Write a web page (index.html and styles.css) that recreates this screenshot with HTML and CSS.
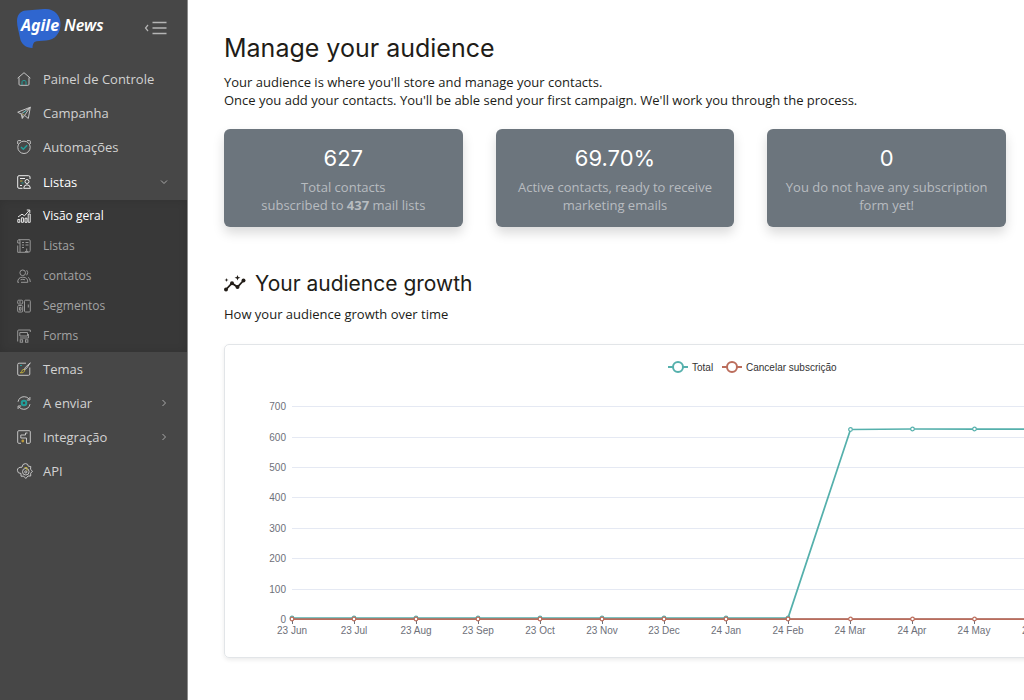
FILE: index.html
```html
<!DOCTYPE html>
<html lang="pt">
<head>
<meta charset="utf-8">
<meta name="viewport" content="width=device-width, initial-scale=1">
<title>Agile News</title>
<link rel="stylesheet" href="styles.css">
</head>
<body>
<div class="app">
  <aside class="sidebar">
    <div class="brand">
      <a class="logo" href="#" aria-label="Agile News">
        <svg width="92" height="42" viewBox="0 0 92 42">
          <path fill="#2f66cf" d="M0 13C0 7 3 3 9 2.500L27 1C37 0 43 7 43.500 15C44 25 38 32 29 32.500C24 33 20 32.500 17.500 34C16 35.500 15.500 38 15.500 40C9 40 4 36 3 30C2 24 0 19 0 13Z"/>
          <text class="logo-text" x="4" y="23">Agile</text>
          <text class="logo-text logo-news" x="47" y="23">News</text>
        </svg>
      </a>
      <button class="collapse" type="button" aria-label="Menu">
        <svg width="24" height="14" viewBox="0 0 24 14" fill="none" stroke="#b5b5b5">
          <path d="M4 4L1.500 7L4 10" stroke-width="1.200"/>
          <path d="M8.500 1.500H22.500M8.500 7H22.500M8.500 12.500H22.500" stroke-width="1.300"/>
        </svg>
      </button>
    </div>
    <nav class="nav">
      <a class="item" href="#">
        <svg class="icon" viewBox="0 0 14 14"><path d="M.6 6.200L7 .7L13.400 6.200M2 5.500V12.200Q2 13.300 3.200 13.300H10.800Q12 13.300 12 12.200V5.500"/><path class="teal" d="M5 13V9.800Q5 8.500 7 8.500T9 9.800V13"/></svg>
        <span>Painel de Controle</span></a>
      <a class="item" href="#">
        <svg class="icon" viewBox="0 0 14 14"><path d="M.7 6.200L13.300 1.200L11.300 12.500L7.600 9.400L5.300 12.400L4.200 8L.7 6.200ZM4.200 8L13.300 1.200L7.600 9.400M5.300 12.400L6 8.500"/><path class="teal" d="M6.500 6.800L9 4.800"/><path class="yellow" d="M5.500 9L6.500 8"/></svg>
        <span>Campanha</span></a>
      <a class="item" href="#">
        <svg class="icon" viewBox="0 0 14 14"><circle cx="7" cy="7.300" r="6.200"/><path d="M.7 4V1.200Q.7.600 1.400.6H4M13.300 4V1.200Q13.300.600 12.600.6H10"/><path class="teal check" d="M4 7L6.300 9.200L10.200 5.300"/></svg>
        <span>Automações</span></a>
      <a class="item open" href="#">
        <svg class="icon" viewBox="0 0 14 14"><path d="M13 4V2Q13 .7 11.500.7H2Q.7.700.7 2V12Q.7 13.300 2 13.300H5.500M3 3.500H8"/><circle cx="10" cy="6.500" r="2"/><path d="M6.700 13.300Q6.800 9.800 10 9.800T13.400 13.300Z"/><path class="yellow" d="M3 6H5.500"/><path class="teal" d="M4.500 8H6.500"/><path d="M3 10.500H5"/></svg>
        <span>Listas</span>
        <svg class="chevron" viewBox="0 0 8 8"><path d="M1 2.500L4 5.500L7 2.500"/></svg></a>
      <div class="submenu">
        <a class="item current" href="#">
          <svg class="icon" viewBox="0 0 14 14"><path d="M.8 13.300V10.500H2.800V13.300ZM4.400 13.300V8.800H6.400V13.300ZM8 13.300V9.200H10V13.300ZM11.200 13.300V5H13.200V13.300Z"/><path d="M1 8L5 5.200L7.500 6.800L12.500 1.200M9.800 1H12.800V4"/></svg>
          <span>Visão geral</span></a>
        <a class="item" href="#">
          <svg class="icon" viewBox="0 0 14 14"><path d="M3 4V13.300H11.500Q13.200 13.300 13.200 11.500V2Q13.200.700 12 .7H1.800Q.7.700.7 2V4H3V2Q3 .7 2 .7M.7 6.500V13.300H3M5 3.500H7M8.500 3.500H11.500M5 6H7M8.500 6H11.500M5 8.500H7"/><path d="M8 12.500H11.500M9.700 9.500V12.500"/></svg>
          <span>Listas</span></a>
        <a class="item" href="#">
          <svg class="icon" viewBox="0 0 14 14"><circle cx="5.700" cy="3.800" r="2.800"/><path d="M2 13.300H.7Q.7 8.200 5.800 8.200T10.800 13.300H4M3.500 10.800Q5.800 9.800 8 10.800M9.700 1.200Q11.800 3.500 9.700 6.300M11 8.300Q13.300 9.300 13.300 13"/></svg>
          <span>contatos</span></a>
        <a class="item" href="#">
          <svg class="icon" viewBox="0 0 14 14"><rect x=".7" y="1.200" width="5" height="3.800" rx="1"/><rect x=".7" y="6.500" width="5" height="6.500" rx="1"/><rect x="7.500" y="1.200" width="5.800" height="11.800" rx="1"/><path d="M2.500 8.300H4V11.200H2.500ZM11.300 5.500V8.500M2 3H4"/></svg>
          <span>Segmentos</span></a>
        <a class="item" href="#">
          <svg class="icon" viewBox="0 0 14 14"><path d="M.7 12.500V2Q.7 1 1.700 1H13.300V3M2.800 3.500H10.500V7H2.800ZM2.800 9H11.500V5"/><rect x="3.200" y="10.800" width="2.400" height="2.400"/><rect x="8.500" y="10.800" width="2.400" height="2.400"/></svg>
          <span>Forms</span></a>
      </div>
      <a class="item" href="#">
        <svg class="icon" viewBox="0 0 14 14"><path d="M9 1.200H2Q.7 1.200.7 2.500V12Q.7 13.300 2 13.300H11.500Q12.800 13.300 12.800 12V5.500"/><path d="M13.300.8L8.500 5.200L7 8L9.500 6.500L13.300.8Z"/><path class="yellow" d="M7 7.300Q4.800 7.500 4.800 9.500L3.200 10.800Q6.800 11.500 7.700 8.800Z"/><path class="teal" d="M3 3.500H5"/></svg>
        <span>Temas</span></a>
      <a class="item" href="#">
        <svg class="icon" viewBox="0 0 14 14"><path d="M1 5.800Q2.300.700 7.200.7Q10.200.700 12 3M12.900 1V4H9.800M13 8.200Q11.700 13.300 6.800 13.300Q3.800 13.300 2 11M1.100 13V10H4.200"/><circle class="teal thick" cx="7" cy="7" r="2.300"/></svg>
        <span>A enviar</span>
        <svg class="chevron" viewBox="0 0 8 8"><path d="M2.500 1L5.500 4L2.500 7"/></svg></a>
      <a class="item" href="#">
        <svg class="icon" viewBox="0 0 14 14"><path d="M4 13.300H1.800Q.7 13.300.7 12.200V1.800Q.7.700 1.800.7H12.200Q13.300.700 13.300 1.800V12.200Q13.300 13.300 12.200 13.300H9.500V8H3.800V5H8.500V3H10.500"/><circle cx="5.800" cy="11" r="1.400" fill="#c8a53c" stroke="none"/></svg>
        <span>Integração</span>
        <svg class="chevron" viewBox="0 0 8 8"><path d="M2.500 1L5.500 4L2.500 7"/></svg></a>
      <a class="item" href="#">
        <svg class="icon gear" viewBox="0 0 16 16"><path d="M5 4.200Q5.300.600 8.300.600T11.300 3.200L13.800 3.500L13.500 6.300L15.500 8.200L13.700 10.200V13H11L8.800 15.500L6.800 13.200H4V10.500Q.4 10.500.4 7.300T5 4.200Z"/><circle cx="8.800" cy="8.700" r="3.300"/><circle cx="8.800" cy="8.900" r="1.100"/><path class="yellow" d="M7.500 4.500H10V7.500"/></svg>
        <span>API</span></a>
    </nav>
  </aside>

  <main class="main">
    <h1>Manage your audience</h1>
    <p class="lead">Your audience is where you'll store and manage your contacts.<br>Once you add your contacts. You'll be able send your first campaign. We'll work you through the process.</p>
    <section class="stats">
      <div class="stat"><h2>627</h2><p>Total contacts<br>subscribed to <strong>437</strong> mail lists</p></div>
      <div class="stat"><h2>69.70%</h2><p>Active contacts, ready to receive<br>marketing emails</p></div>
      <div class="stat"><h2>0</h2><p>You do not have any subscription<br>form yet!</p></div>
    </section>
    <section class="growth">
      <h2 class="growth-title">
        <svg width="22" height="18" viewBox="0 0 22 18"><path fill="none" stroke="#211c17" stroke-width="1.800" d="M2 14.500L8 8.200L13.500 12L19.500 5.500"/><g fill="#211c17"><circle cx="2" cy="14.500" r="2"/><circle cx="8" cy="8.200" r="2"/><circle cx="13.500" cy="12" r="2"/><circle cx="19.500" cy="5.500" r="2"/><path d="M13.500 0L14.300 2L16.400 2.800L14.300 3.600L13.500 5.600L12.700 3.600L10.600 2.800L12.700 2ZM2.500 3L3 4.500L4.500 5L3 5.500L2.500 7L2 5.500L.5 5L2 4.500Z"/></g></svg>
        Your audience growth</h2>
      <p class="lead">How your audience growth over time</p>
      <div class="chart-card">
        <svg class="chart" width="1054" height="312" viewBox="0 0 1054 312" role="img" aria-label="Your audience growth">
          <defs>
            <marker id="dot-total" markerUnits="userSpaceOnUse" viewBox="0 0 6 6" refX="3" refY="3" markerWidth="6" markerHeight="6"><circle cx="3" cy="3" r="1.800" fill="#fff" stroke="#55b0ac" stroke-width="1.200"/></marker>
            <marker id="dot-cancel" markerUnits="userSpaceOnUse" viewBox="0 0 6 6" refX="3" refY="3" markerWidth="6" markerHeight="6"><circle cx="3" cy="3" r="1.800" fill="#fff" stroke="#bb6d5c" stroke-width="1.200"/></marker>
          </defs>
          <g class="legend">
            <path stroke="#55b0ac" d="M443 22H463"/><circle stroke="#55b0ac" cx="453" cy="22" r="5"/><text x="467" y="26">Total</text>
            <path stroke="#bb6d5c" d="M497 22H517"/><circle stroke="#bb6d5c" cx="507" cy="22" r="5"/><text x="521" y="26">Cancelar subscrição</text>
          </g>
          <path class="grid" d="M67 61.500H1034M67 92.500H1034M67 122.500H1034M67 152.500H1034M67 183.500H1034M67 213.500H1034M67 244.500H1034"/>
          <path class="axis" d="M67 274H1034M67.500 274V279M129.500 274V279M191.500 274V279M253.500 274V279M315.500 274V279M377.500 274V279M439.500 274V279M501.500 274V279M563.500 274V279M625.500 274V279M687.500 274V279M749.500 274V279M811.500 274V279"/>
          <g class="axis-label y">
            <text x="61" y="65">700</text><text x="61" y="96">600</text><text x="61" y="126">500</text><text x="61" y="156">400</text><text x="61" y="187">300</text><text x="61" y="217">200</text><text x="61" y="248">100</text><text x="61" y="278">0</text>
          </g>
          <g class="axis-label x">
            <text x="67" y="289">23 Jun</text><text x="129" y="289">23 Jul</text><text x="191" y="289">23 Aug</text><text x="253" y="289">23 Sep</text><text x="315" y="289">23 Oct</text><text x="377" y="289">23 Nov</text><text x="439" y="289">23 Dec</text><text x="501" y="289">24 Jan</text><text x="563" y="289">24 Feb</text><text x="625" y="289">24 Mar</text><text x="687" y="289">24 Apr</text><text x="749" y="289">24 May</text><text x="812" y="289">24 Jun</text>
          </g>
          <polyline class="series total" points="67,273 129,273 191,273 253,273 315,273 377,273 439,273 501,273 563,273 625.500,84.500 687.500,84 749.500,84 812,84"/>
          <polyline class="series cancel" points="67,274 129,274 191,274 253,274 315,274 377,274 439,274 501,274 563,274 625.500,274 687.500,274 749.500,274 812,274"/>
        </svg>
      </div>
    </section>
  </main>
</div>
</body>
</html>
```
FILE: styles.css
```css
* { box-sizing: border-box; }
body { margin: 0; background: #fff; color: #211c17; font: 13px/18px "Open Sans", sans-serif; }
h1, h2, p { margin: 0; font-weight: 400; }
h1, h2 { font-family: Inter, sans-serif; }
a { color: inherit; text-decoration: none; }
.app { display: flex; min-height: 100vh; }

.sidebar { flex: none; width: 188px; background: #474747; border-right: 1px solid #8c8c8c; color: #d2d2d2; }
.brand { display: flex; justify-content: space-between; align-items: flex-start; height: 62px; padding: 8px 19px 0 17px; }
.logo svg { display: block; }
.logo-text { font: italic 700 16px "Noto Sans", sans-serif; fill: #fff; }
.logo-news { font-weight: 600; }
.collapse { margin-top: 13px; padding: 0; border: 0; background: none; cursor: pointer; line-height: 0; }
.item { display: flex; align-items: center; gap: 12px; height: 34px; padding: 0 19px 0 17px; }
.item.open { height: 36px; color: #fff; }
.icon { flex: none; width: 14px; height: 14px; fill: none; stroke: currentColor; stroke-width: 1; overflow: visible; opacity: .9; }
.gear { width: 16px; height: 16px; margin-right: -2px; }
.teal { stroke: #20a9a4; }
.yellow { stroke: #c8b53c; }
.check { stroke-width: 1.5; }
.thick { stroke-width: 2; }
.chevron { width: 8px; height: 8px; margin-left: auto; fill: none; stroke: #a9a9a9; stroke-width: 1; }
.submenu { background: #383838; box-shadow: inset 0 0 8px rgba(0, 0, 0, .12); color: #a3a3a3; padding-top: 1px; padding-bottom: 1px; font-size: 12px; }
.submenu .item { height: 30px; }
.submenu .current { color: #fff; }

.main { flex: 1; min-width: 0; overflow: hidden; padding: 32px 18px 42px 36px; }
h1 { font-size: 25px; line-height: 32px; }
.lead { margin-top: 9px; }
.stats { display: grid; grid-template-columns: repeat(3, 1fr); gap: 33px; margin-top: 20px; }
.stat { padding: 13px 8px; border-radius: 6px; background: #6c757d; box-shadow: 0 6px 12px rgba(0, 0, 0, .15); color: #b8bcc0; text-align: center; }
.stat h2 { margin-bottom: 4px; font-size: 22px; line-height: 32px; color: #fff; }
.growth { margin-top: 43px; }
.growth-title { display: flex; align-items: center; gap: 9px; font-size: 21px; line-height: 28px; }
.growth .lead { margin-top: 7px; }
.chart-card { width: max-content; margin-top: 21px; border: 1px solid #e2e5e8; border-radius: 5px; box-shadow: 0 2px 4px rgba(0, 0, 0, .08); }
.chart { display: block; font-family: "Liberation Sans", Arial, sans-serif; }
.legend { fill: #fff; stroke-width: 2; }
.legend text { fill: #333; stroke: none; font-size: 10px; }
.grid { stroke: #e5e9f3; }
.axis { stroke: #6e7079; }
.axis-label { fill: #6e7079; font-size: 10px; }
.axis-label.y { text-anchor: end; }
.axis-label.x { text-anchor: middle; }
.series { fill: none; stroke-width: 1.75; }
.total { stroke: #55b0ac; marker-mid: url(#dot-total); marker-start: url(#dot-total); }
.cancel { stroke: #bb6d5c; marker-mid: url(#dot-cancel); marker-start: url(#dot-cancel); }
```
